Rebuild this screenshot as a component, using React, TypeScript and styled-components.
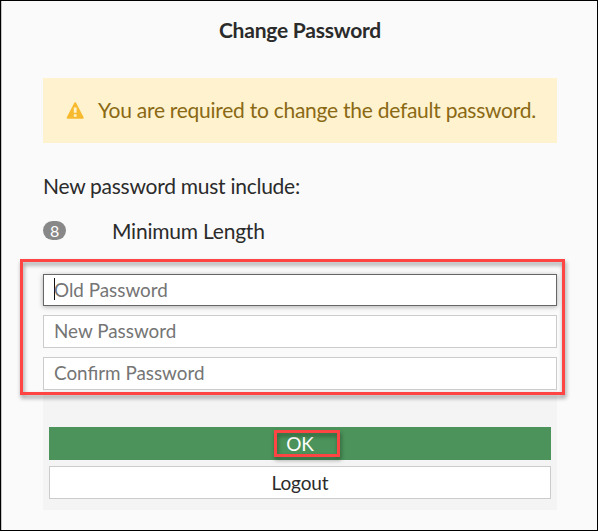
import React from "react";
import styled, { createGlobalStyle } from "styled-components";

const GlobalStyle = createGlobalStyle`
  * { box-sizing: border-box; }
  body { margin: 0; }
`;

const Window = styled.main`
  position: relative;
  width: 598px;
  height: 531px;
  padding: 17px 40px 0 41px;
  border: 1px solid #000;
  background: #fafafa;
  box-shadow: inset 1px 0 0 #c6c6c6;
  color: #2b2b2b;
  font-family: Lato, sans-serif;
  font-size: 21px;
  overflow: hidden;
`;

const Content = styled.div`
  display: flex;
  flex-direction: column;
  width: 514px;
  margin-left: 1px;
`;

const Title = styled.h1`
  margin: 0 0 36px;
  height: 24px;
  font-size: 21px;
  font-weight: 700;
  line-height: 24px;
  letter-spacing: -0.22px;
  text-align: center;
`;

const Alert = styled.div`
  display: flex;
  align-items: center;
  height: 65px;
  padding: 0 0 2px 22px;
  background: #fff2ce;
  color: #8a6914;
  letter-spacing: -0.26px;
  white-space: nowrap;

  svg { margin-right: 13px; flex: none; }
`;

const Lead = styled.p`
  margin: 29px 0 0;
  height: 28px;
  line-height: 28px;
  letter-spacing: -0.26px;
`;

const Rule = styled.div`
  display: flex;
  align-items: center;
  height: 28px;
  margin: 16px 0 30px;
  letter-spacing: -0.22px;
`;

const Badge = styled.span`
  display: flex;
  align-items: center;
  justify-content: center;
  width: 23px;
  height: 19px;
  margin-right: 46px;
  border-radius: 10px;
  background: #888;
  color: #fff;
  font-size: 16px;
  line-height: 19px;
`;

const Fields = styled.div`
  display: flex;
  flex-direction: column;
  gap: 9px;
`;

const Field = styled.div<{ $focused?: boolean }>`
  display: flex;
  align-items: center;
  height: ${(p) => (p.$focused ? 32 : 33)}px;
  padding: 0 0 2px 10px;
  border: 1px solid ${(p) => (p.$focused ? "#666" : "#ccc")};
  background: #fff;
  box-shadow: ${(p) => (p.$focused ? "0 1px 5px rgba(0, 0, 0, 0.3)" : "none")};
  color: #757575;
  font-size: 18.85px;
`;

const Caret = styled.i`
  width: 1px;
  height: 22px;
  margin-right: -1px;
  background: #111;
`;

const Actions = styled.div`
  display: flex;
  flex-direction: column;
  gap: 6px;
  height: 120px;
  padding: 37px 6px 0;
  background: #f4f4f4;
`;

const Button = styled.button<{ $primary?: boolean }>`
  height: 33px;
  padding: 0;
  border: ${(p) => (p.$primary ? "0" : "1px solid #ccc")};
  background: ${(p) => (p.$primary ? "#4b935a" : "#fff")};
  color: ${(p) => (p.$primary ? "#fff" : "#2b2b2b")};
  font: 19px Lato, sans-serif;
  letter-spacing: -0.12px;
`;

const Highlight = styled.div<{ $x: number; $y: number; $w: number; $h: number }>`
  position: absolute;
  left: ${(p) => p.$x - 1}px;
  top: ${(p) => p.$y - 1}px;
  width: ${(p) => p.$w}px;
  height: ${(p) => p.$h}px;
  border: 3px solid #ff4444;
  filter: drop-shadow(1px 3px 2px rgba(0, 0, 0, 0.4));
  pointer-events: none;
`;

const WarningIcon = () => (
  <svg width="20" height="18" viewBox="0 0 20 18">
    <path d="M10.2 2.2 17.7 16.8H2.7Z" fill="#f7ba2f" stroke="#f7ba2f" strokeWidth="2" strokeLinejoin="round" />
    <path d="M8.8 6.5h2.8v5.2H8.8zM8.8 13.2h2.8v2.5H8.8z" fill="#fff2ce" />
  </svg>
);

export default function App() {
  return (
    <>
      <GlobalStyle />
      <Window>
        <Content>
          <Title>Change Password</Title>
          <Alert>
            <WarningIcon />
            <span>You are required to change the default password.</span>
          </Alert>
          <Lead>New password must include:</Lead>
          <Rule>
            <Badge>8</Badge>
            <span>Minimum Length</span>
          </Rule>
          <Fields>
            <Field $focused>
              <Caret />
              Old Password
            </Field>
            <Field>New Password</Field>
            <Field>Confirm Password</Field>
          </Fields>
          <Actions>
            <Button $primary>OK</Button>
            <Button>Logout</Button>
          </Actions>
        </Content>
        <Highlight $x={20} $y={259} $w={545} $h={136} />
        <Highlight $x={274} $y={430} $w={66} $h={27} />
      </Window>
    </>
  );
}
